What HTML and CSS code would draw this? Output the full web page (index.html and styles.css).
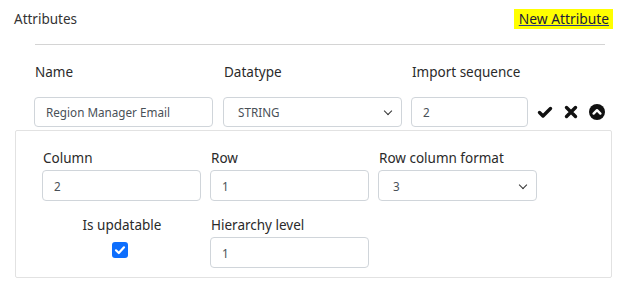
FILE: index.html
```html
<!DOCTYPE html>
<html lang="en">
<head>
    <meta charset="UTF-8">
    <meta name="viewport" content="width=device-width, initial-scale=1.0">
    <title>Attributes</title>
    <link rel="stylesheet" href="styles.css">
</head>
<body>
    <div class="attr-header">
        <span class="attr-title">Attributes</span>
        <a href="#" class="new-attr">New Attribute</a>
    </div>
    <hr class="divider">

    <div class="attr-row">
        <div class="field name-field">
            <label>Name</label>
            <input type="text" value="Region Manager Email">
        </div>
        <div class="field type-field">
            <label>Datatype</label>
            <select><option>STRING</option></select>
        </div>
        <div class="field seq-field">
            <label>Import sequence</label>
            <input type="text" value="2">
        </div>
        <div class="row-actions">
            <!-- save -->
            <svg class="icon" viewBox="0 0 16 16"><path d="M2.5 8.5 L6 12 L13.5 4.5" fill="none" stroke="#111" stroke-width="3.4" stroke-linecap="round" stroke-linejoin="round"/></svg>
            <!-- cancel -->
            <svg class="icon" viewBox="0 0 16 16"><path d="M3.5 3.5 L12.5 12.5 M12.5 3.5 L3.5 12.5" fill="none" stroke="#111" stroke-width="3.4" stroke-linecap="round"/></svg>
            <!-- collapse -->
            <svg class="icon" viewBox="0 0 16 16"><circle cx="8" cy="8" r="8" fill="#111"/><path d="M4.6 9.6 L8 6.2 L11.4 9.6" fill="none" stroke="#fff" stroke-width="2.4" stroke-linecap="round" stroke-linejoin="round"/></svg>
        </div>
    </div>

    <div class="attr-details">
        <div class="details-grid">
            <div class="field">
                <label>Column</label>
                <input type="text" value="2">
            </div>
            <div class="field">
                <label>Row</label>
                <input type="text" value="1">
            </div>
            <div class="field">
                <label>Row column format</label>
                <select><option>3</option></select>
            </div>
            <div class="field check-field">
                <label>Is updatable</label>
                <span class="checkbox">
                    <svg viewBox="0 0 16 16"><path d="M4 8.3 L6.8 11 L12 5.3" fill="none" stroke="#fff" stroke-width="2.2" stroke-linecap="round" stroke-linejoin="round"/></svg>
                </span>
            </div>
            <div class="field">
                <label>Hierarchy level</label>
                <input type="text" value="1">
            </div>
        </div>
    </div>
</body>
</html>
```

FILE: styles.css
```css
/* General Styles */
body {
    font-family: "Noto Sans", "Open Sans", sans-serif;
    margin: 0;
    padding: 0;
    background-color: #fff;
    color: #2a2a2a;
}

.attr-header {
    display: flex;
    justify-content: space-between;
    align-items: center;
    padding: 9px 14px 0 14px;
    height: 20px;
    font-size: 13.5px;
}

.attr-title {
    color: #333;
}

.new-attr {
    color: #1c1c3a;
    text-decoration: underline;
    text-decoration-color: #2b3a8c;
    background-color: #ffff00;
    padding: 0 4px 0 5px;
    line-height: 20px;
    font-size: 13.8px;
    margin-right: -3px;
}

.divider {
    border: none;
    border-top: 1px solid #d4d4d4;
    margin: 15px 19px 0 35px;
}

/* Fields */
.field {
    display: flex;
    flex-direction: column;
}

.field label {
    font-size: 13.5px;
    line-height: 20px;
    color: #2a2a2a;
}

.field input,
.field select {
    box-sizing: border-box;
    height: 31px;
    border: 1px solid #d0d5da;
    border-radius: 4px;
    font-family: inherit;
    font-size: 11.7px;
    color: #495057;
    background-color: #fff;
    padding: 0 11px;
}

.field select {
    appearance: none;
    padding-left: 14px;
}

/* Attribute row */
.attr-row {
    display: flex;
    align-items: flex-end;
    gap: 10px;
    margin: 17px 0 0 34px;
}

.attr-row .field label {
    margin-bottom: 15px;
    padding-left: 1px;
}

.name-field { width: 179px; }
.type-field { width: 179px; }
.seq-field { width: 117px; margin-left: -1px; }

.attr-row .field input,
.attr-row .field select {
    height: 30px;
}

.row-actions {
    display: flex;
    align-items: center;
    gap: 10px;
    height: 30px;
    margin-left: -1px;
}

.icon {
    width: 16px;
    height: 16px;
}

/* Details panel */
.attr-details {
    margin: 3px 12px 0 15px;
    border: 1px solid #e2e2e2;
    border-radius: 2px;
    padding: 17px 0 9px 26px;
}

.details-grid {
    display: grid;
    grid-template-columns: 159px 159px 159px;
    column-gap: 9px;
    row-gap: 14px;
}

.details-grid .field label {
    margin-bottom: 2px;
    padding-left: 1px;
}

/* select chevron */
.type-field,
.details-grid .field:nth-child(3) {
    position: relative;
}

.type-field::after,
.details-grid .field:nth-child(3)::after {
    content: "";
    position: absolute;
    right: 11px;
    bottom: 13px;
    width: 5px;
    height: 5px;
    border-right: 1.6px solid #333;
    border-bottom: 1.6px solid #333;
    transform: rotate(45deg);
}

.check-field {
    align-items: center;
}

.details-grid .check-field label {
    margin-bottom: 7px;
}

.checkbox {
    display: block;
    width: 16px;
    height: 16px;
    border-radius: 3px;
    background-color: #0d6efd;
    margin-left: -3px;
}

.checkbox svg {
    display: block;
    width: 16px;
    height: 16px;
}
```
